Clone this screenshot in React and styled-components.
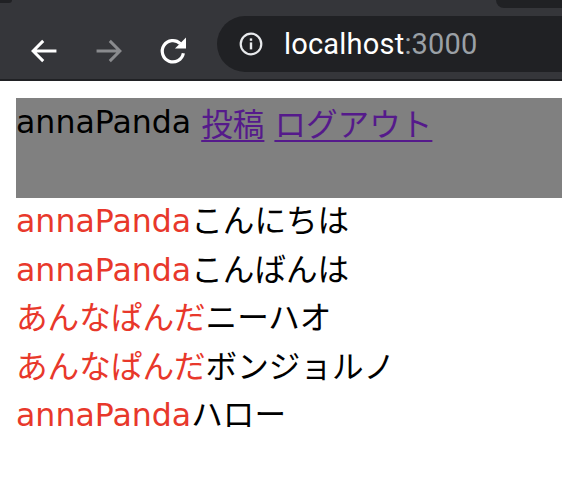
import React from "react";
import styled, { createGlobalStyle } from "styled-components";

const Global = createGlobalStyle`
  html, body {
    margin: 0;
    padding: 0;
    background: #ffffff;
  }
  body {
    width: 562px;
    height: 488px;
    overflow: hidden;
  }
`;

const Chrome = styled.div`
  background: #35363a;
  border-bottom: 2px solid #202124;
  display: flex;
  flex-direction: column;
`;

const TabStrip = styled.div`
  height: 8px;
  display: flex;
  justify-content: space-between;
  align-items: flex-start;
`;

const TabEdge = styled.div`
  background: #202124;
  width: ${(p) => p.w}px;
  height: ${(p) => p.h}px;
  border-radius: ${(p) => (p.right ? "0 0 0 10px" : "0 0 10px 0")};
`;

const Toolbar = styled.div`
  height: 71px;
  display: flex;
  align-items: flex-start;
  padding-top: 8px;
  box-sizing: border-box;
`;

const NavButton = styled.div`
  width: 28px;
  height: 28px;
  margin-top: 21px;
  margin-left: ${(p) => p.ml}px;
  display: flex;
  align-items: center;
  justify-content: center;
`;

const Omnibox = styled.div`
  flex: 1;
  height: 56px;
  margin-left: 30px;
  background: #202124;
  border-radius: 28px 0 0 28px;
  display: flex;
  align-items: center;
  padding-left: 22px;
  gap: 21px;
`;

const Url = styled.span`
  font-family: Roboto, "Liberation Sans", sans-serif;
  font-size: 29px;
  color: #ffffff;
  letter-spacing: 0.2px;
`;

const Port = styled.span`
  color: #9aa0a6;
`;

const Page = styled.div`
  padding: 17px 0 0 16px;
  font-family: "DejaVu Sans", "Noto Sans CJK JP", sans-serif;
  font-size: 31.6px;
  line-height: 49px;
`;

const Header = styled.header`
  background: #808080;
  height: 100px;
  color: #000000;
  display: flex;
  align-items: flex-start;
  gap: 10px;
  white-space: nowrap;
`;

const Name = styled.span`
  color: ${(p) => p.color || "inherit"};
`;

const NavLink = styled.a`
  color: #551a8b;
  text-decoration: underline;
  text-decoration-thickness: 2px;
  text-underline-offset: 4px;
  font-family: "Noto Sans CJK JP", sans-serif;
`;

const List = styled.ul`
  list-style: none;
  margin: 0;
  padding: 0;
`;

const Item = styled.li`
  height: 48.5px;
  line-height: 41px;
  white-space: nowrap;
`;

const Msg = styled.span`
  font-family: "Noto Sans CJK JP", sans-serif;
  color: #000000;
`;

const posts = [
  { user: "annaPanda", text: "こんにちは" },
  { user: "annaPanda", text: "こんばんは" },
  { user: "あんなぱんだ", text: "ニーハオ" },
  { user: "あんなぱんだ", text: "ボンジョルノ" },
  { user: "annaPanda", text: "ハロー" },
];

const Arrow = ({ color, flip }) => (
  <svg width="28" height="28" viewBox="3 3 18 18" style={flip ? { transform: "scaleX(-1)" } : null}>
    <path d="M20 12H5M11.5 5.5L5 12l6.5 6.5" fill="none" stroke={color} strokeWidth="1.9" />
  </svg>
);

const Reload = () => (
  <svg width="28" height="28" viewBox="2 2 20 20">
    <path d="M19.4 13.6A7.6 7.6 0 1 1 17.2 6.7" fill="none" stroke="#ffffff" strokeWidth="2.3" />
    <path d="M13.4 10.2h7.9V2.3z" fill="#ffffff" />
  </svg>
);

const Info = () => (
  <svg width="24" height="24" viewBox="0 0 24 24">
    <circle cx="12" cy="12" r="10.3" fill="none" stroke="#e8eaed" strokeWidth="2.2" />
    <rect x="10.8" y="10.4" width="2.4" height="7" fill="#e8eaed" />
    <rect x="10.8" y="6.4" width="2.4" height="2.4" fill="#e8eaed" />
  </svg>
);

export default function App() {
  return (
    <>
      <Global />
      <Chrome>
        <TabStrip>
          <TabEdge w={12} h={3} />
          <TabEdge w={66} h={8} right />
        </TabStrip>
        <Toolbar>
          <NavButton ml={30}>
            <Arrow color="#ffffff" />
          </NavButton>
          <NavButton ml={37}>
            <Arrow color="#8a8b8e" flip />
          </NavButton>
          <NavButton ml={36}>
            <Reload />
          </NavButton>
          <Omnibox>
            <Info />
            <Url>
              localhost<Port>:3000</Port>
            </Url>
          </Omnibox>
        </Toolbar>
      </Chrome>
      <Page>
        <Header>
          <Name>annaPanda</Name>
          <NavLink href="#">投稿</NavLink>
          <NavLink href="#">ログアウト</NavLink>
        </Header>
        <List>
          {posts.map((p, i) => (
            <Item key={i}>
              <Name color="#e8382b">{p.user}</Name>
              <Msg>{p.text}</Msg>
            </Item>
          ))}
        </List>
      </Page>
    </>
  );
}
